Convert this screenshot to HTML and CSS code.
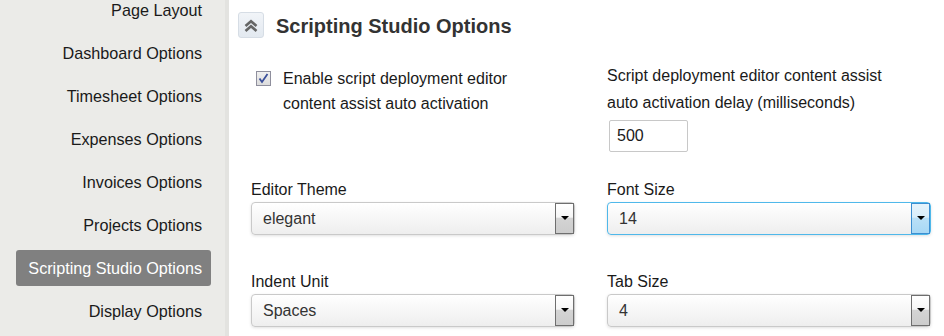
FILE: index.html
```html
<!DOCTYPE html>
<html>
<head>
<meta charset="utf-8">
<link rel="stylesheet" href="styles.css">
</head>
<body>
<div class="page">
  <nav class="sidebar">
    <ul class="nav">
      <li class="nav-item">Page Layout</li>
      <li class="nav-item">Dashboard Options</li>
      <li class="nav-item">Timesheet Options</li>
      <li class="nav-item">Expenses Options</li>
      <li class="nav-item">Invoices Options</li>
      <li class="nav-item">Projects Options</li>
      <li class="nav-item active">Scripting Studio Options</li>
      <li class="nav-item">Display Options</li>
    </ul>
  </nav>
  <main class="main">
    <div class="header">
      <span class="collapse-btn">
        <svg width="14" height="13" viewBox="0 0 14 13">
          <path d="M1.5 7 L7 2.2 L12.5 7" fill="none" stroke="#666666" stroke-width="2.6" stroke-linejoin="miter"/>
          <path d="M1.5 12 L7 7.2 L12.5 12" fill="none" stroke="#666666" stroke-width="2.6" stroke-linejoin="miter"/>
        </svg>
      </span>
      <h1 class="title">Scripting Studio Options</h1>
    </div>
    <div class="grid">
      <div class="field check-field">
        <span class="checkbox">
          <svg width="11" height="11" viewBox="0 0 11 11"><path d="M1.5 5.5 L4 9 L9.5 1" fill="none" stroke="#3a4f9a" stroke-width="1.8"/></svg>
        </span>
        <span class="check-label">Enable script deployment editor<br>content assist auto activation</span>
      </div>
      <div class="field delay-field">
        <div class="label two-line">Script deployment editor content assist<br>auto activation delay (milliseconds)</div>
        <div class="text-input">500</div>
      </div>
      <div class="field">
        <div class="label">Editor Theme</div>
        <div class="select"><span class="select-value">elegant</span><span class="select-arrow"><span class="tri"></span></span></div>
      </div>
      <div class="field">
        <div class="label">Font Size</div>
        <div class="select focused"><span class="select-value">14</span><span class="select-arrow"><span class="tri"></span></span></div>
      </div>
      <div class="field">
        <div class="label">Indent Unit</div>
        <div class="select"><span class="select-value">Spaces</span><span class="select-arrow"><span class="tri"></span></span></div>
      </div>
      <div class="field">
        <div class="label">Tab Size</div>
        <div class="select"><span class="select-value">4</span><span class="select-arrow"><span class="tri"></span></span></div>
      </div>
    </div>
  </main>
</div>
</body>
</html>
```
FILE: styles.css
```css
html, body {
  margin: 0;
  padding: 0;
  background: #ffffff;
  height: 336px;
  overflow: hidden;
}
body {
  font-family: "Liberation Sans", Arial, sans-serif;
  color: #1c1c1c;
}
.page {
  display: flex;
  height: 336px;
}
.sidebar {
  width: 225px;
  flex: none;
  background: #ebebe8;
  border-right: 4px solid #e3e3e0;
  box-sizing: content-box;
  overflow: hidden;
}
.nav {
  list-style: none;
  margin: -8px 14px 0 16px;
  padding: 0;
  display: flex;
  flex-direction: column;
  gap: 7px;
}
.nav-item {
  height: 36px;
  line-height: 36px;
  text-align: right;
  padding-right: 9px;
  font-size: 16.2px;
  color: #1a1a1a;
  border-radius: 3px;
  white-space: nowrap;
}
.nav-item.active {
  background: #808080;
  color: #ffffff;
}
.main {
  flex: 1;
  padding: 12px 0 0 9px;
}
.header {
  display: flex;
  align-items: center;
  gap: 12px;
  height: 26px;
}
.collapse-btn {
  width: 24px;
  height: 24px;
  border: 1px solid #d6dde5;
  border-radius: 3px;
  background: linear-gradient(#f1f4f8, #e3e9f0);
  display: flex;
  align-items: center;
  justify-content: center;
}
.title {
  margin: 0;
  padding-top: 2px;
  font-size: 20px;
  font-weight: bold;
  color: #333333;
}
.grid {
  display: grid;
  grid-template-columns: 356px 324px;
  column-gap: 0;
  padding-left: 13px;
  margin-top: 24px;
}
.field {
  display: flex;
  flex-direction: column;
}
.check-field {
  flex-direction: row;
  align-items: flex-start;
  padding-left: 5px;
  padding-top: 4px;
}
.checkbox {
  width: 13px;
  height: 13px;
  border: 1px solid #8f8f9d;
  background: linear-gradient(#f0f0f0, #dcdcdc);
  display: flex;
  align-items: center;
  justify-content: center;
  margin-top: 5px;
  flex: none;
}
.check-label {
  margin-left: 12px;
  font-size: 16px;
  line-height: 25px;
  color: #1a1a1a;
}
.delay-field {
  margin-bottom: 28px;
}
.label {
  font-size: 16px;
  color: #1a1a1a;
  line-height: 20px;
  margin-bottom: 2px;
}
.two-line {
  line-height: 27px;
  margin-bottom: 4px;
}
.text-input {
  width: 70px;
  height: 30px;
  border: 1px solid #c8c8c8;
  border-radius: 2px;
  margin-left: 2px;
  padding-left: 7px;
  line-height: 30px;
  font-size: 16px;
  color: #1a1a1a;
}
.select {
  width: 324px;
  box-sizing: border-box;
  height: 33px;
  border: 1px solid #c9c9c9;
  border-radius: 4px;
  background: linear-gradient(#ffffff, #eeeeee);
  box-shadow: 0 1px 3px rgba(0,0,0,0.12);
  display: flex;
  align-items: stretch;
  margin-bottom: 37px;
}
.select-value {
  flex: 1;
  padding-left: 11px;
  font-size: 16px;
  line-height: 31px;
  color: #333333;
}
.select-arrow {
  width: 19px;
  border: 1px solid #6e6e6e;
  background: linear-gradient(#ffffff 0%, #f6f6f6 45%, #d4d4d4 50%, #cccccc 100%);
  display: flex;
  justify-content: center;
  padding-top: 12px;
  box-sizing: border-box;
}
.tri {
  width: 0;
  height: 0;
  border-left: 4px solid transparent;
  border-right: 4px solid transparent;
  border-top: 4px solid #000000;
}
.select.focused {
  border-color: #4fb8ea;
}
.select.focused .select-arrow {
  border-color: #3c8ed0;
  background: linear-gradient(#e6f3fb 0%, #d9eefa 45%, #b9e0f7 50%, #a8d8f5 100%);
}
```
